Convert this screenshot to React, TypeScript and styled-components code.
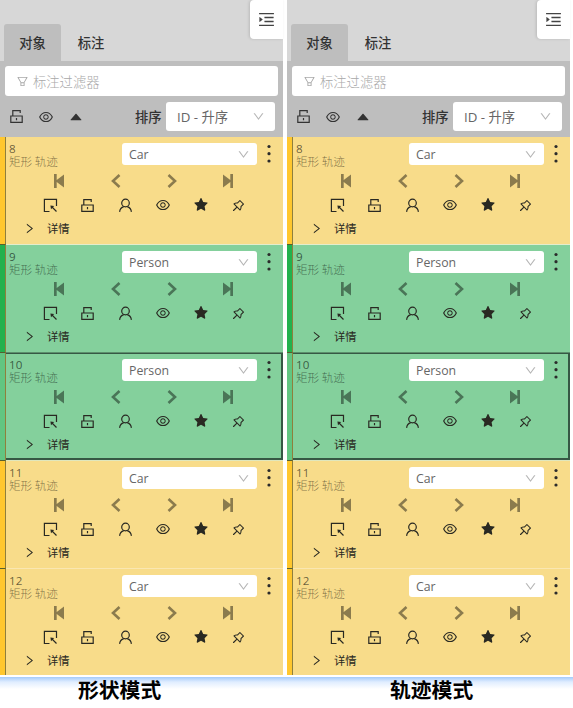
import React from "react";
import styled, { createGlobalStyle } from "styled-components";
import {
  AiFillCaretUp,
  AiFillStar,
  AiOutlineDown,
  AiOutlineEye,
  AiOutlineFilter,
  AiOutlineMenuUnfold,
  AiOutlinePushpin,
  AiOutlineRight,
} from "react-icons/ai";

const GlobalStyle = createGlobalStyle`
  * { box-sizing: border-box; }
  body {
    margin: 0;
    background: #fff;
    color: #333;
    font-family: "Noto Sans", "Noto Sans CJK SC", sans-serif;
  }
  svg { display: block; flex: none; }
`;

const Page = styled.main`
  width: 573px;
  height: 708px;
  overflow: hidden;
`;

const Panels = styled.div`
  display: flex;
  gap: 4px;
  height: 677px;
  padding-bottom: 3px;
`;

const Panel = styled.section`
  width: 283px;
  height: 674px;
  background: #bebebe;
`;

const TabBar = styled.header`
  display: flex;
  align-items: flex-end;
  height: 61px;
  padding-left: 4px;
  background: #d7d7d7;
`;

const Tab = styled.div<{ $active?: boolean }>`
  display: flex;
  align-items: center;
  justify-content: center;
  width: ${(p) => (p.$active ? 57 : 60)}px;
  height: 37px;
  border-radius: 3px 3px 0 0;
  background: ${(p) => (p.$active ? "#bebebe" : "transparent")};
  color: #333;
  font-size: 13.3px;
  font-weight: 500;
`;

const FoldButton = styled.div`
  display: flex;
  align-items: center;
  justify-content: center;
  align-self: flex-start;
  width: 33px;
  height: 39px;
  margin-left: auto;
  border-radius: 4px 0 0 4px;
  background: #fff;
  color: #444;
  box-shadow: -1px 0 3px #0002;
`;

const FilterBox = styled.div`
  display: flex;
  align-items: center;
  gap: 4px;
  width: 273px;
  height: 30px;
  margin: 5px 0 0 5px;
  padding-left: 11px;
  border-radius: 3px;
  background: #fff;
  color: #a8a8a8;
  font-size: 13.3px;
  font-weight: 300;
`;

const SortBar = styled.div`
  display: grid;
  grid-template-columns: 29px 30px 67px 31px 109px;
  align-items: center;
  height: 41px;
  padding-left: 9px;
  color: #333;
`;

const SortLabel = styled.span`
  font-size: 13.3px;
  font-weight: 500;
  line-height: 20px;
  white-space: nowrap;
`;

const Select = styled.div<{ $compact?: boolean }>`
  display: flex;
  align-items: center;
  justify-content: space-between;
  width: ${(p) => (p.$compact ? 135 : 109)}px;
  height: ${(p) => (p.$compact ? 22 : 29)}px;
  padding: ${(p) => (p.$compact ? "0 7px" : "0 10px 0 11px")};
  border-radius: 3px;
  background: #fff;
  color: #666;
  font-family: "Open Sans", "Noto Sans CJK SC", sans-serif;
  font-size: ${(p) => (p.$compact ? 12.3 : 13.3)}px;
  font-weight: 400;
  white-space: nowrap;

  svg { color: #b5b5b5; }
`;

const Item = styled.article<{ $bg: string; $last: boolean }>`
  display: grid;
  grid-template-columns: 6px 1fr;
  height: ${(p) => (p.$last ? 105 : 108)}px;
  background: ${(p) => p.$bg};
`;

const Strip = styled.div<{ $color: string; $last: boolean }>`
  border-right: 1px solid #8f7f3c;
  border-bottom: ${(p) => (p.$last ? "0" : "1px solid #56602f")};
  background: ${(p) => p.$color};
`;

const Body = styled.div<{ $active: boolean; $line: string }>`
  display: grid;
  grid-template-rows: 31px 24px 24px 1fr;
  padding: ${(p) => (p.$active ? "0" : "1px 1px 4px 0")};
  border: 0 solid #365844;
  border-width: ${(p) => (p.$active ? "1px 2px 2px 0" : "0")};
  box-shadow: ${(p) => (p.$active ? `0 1px ${p.$line}` : `inset 0 -1px ${p.$line}`)};
  margin-bottom: ${(p) => (p.$active ? "1px" : "0")};
`;

const Heading = styled.div`
  display: grid;
  grid-template-columns: 113px 135px 24px;
  padding: 5px 0 0 3px;
`;

const Identity = styled.div`
  display: grid;
  grid-template-rows: 12px 13px;
  white-space: nowrap;
`;

const ObjectNumber = styled.span`
  color: #00000098;
  font-family: "Open Sans", sans-serif;
  font-size: 11.6px;
  line-height: 11px;
`;

const Kind = styled.span`
  color: #00000085;
  font-family: "Noto Sans CJK SC", sans-serif;
  font-size: 11.6px;
  font-weight: 300;
  line-height: 12px;
`;

const NavRow = styled.div`
  display: grid;
  grid-template-columns: repeat(4, 56.4px);
  align-items: center;
  justify-items: center;
  padding-left: 25px;
  color: #00000070;
`;

const ActionRow = styled.div`
  display: grid;
  grid-template-columns: repeat(6, 37.6px);
  align-items: center;
  justify-items: center;
  padding-left: 25.6px;
  color: #292922;
`;

const Details = styled.div`
  display: flex;
  align-items: center;
  gap: 11px;
  height: 22px;
  padding-left: 17px;
  color: #292922;
  font-size: 11.3px;
`;

const Captions = styled.footer`
  display: grid;
  grid-template-columns: 312px 1fr;
  height: 31px;
  padding-left: 78px;
  background: linear-gradient(#a5cbfa, #e0edff 5px, #fff 12px);
  color: #000;
  font-size: 20.8px;
  font-weight: 700;
  line-height: 26px;
`;

const NavIcon = ({ shape }: { shape: "first" | "previous" | "next" | "last" }) => (
  <svg width="14" height="16" viewBox="0 0 14 16">
    {shape === "first" && <path d="M2 1h2.7v6L12 1.5v13L4.7 9v6H2z" fill="currentColor" />}
    {shape === "last" && <path d="M12 1H9.3v6L2 1.5v13L9.3 9v6H12z" fill="currentColor" />}
    {shape === "previous" && (
      <path d="M10.5 2 4 8l6.5 6" fill="none" stroke="currentColor" strokeWidth="2.6" />
    )}
    {shape === "next" && (
      <path d="M3.5 2 10 8l-6.5 6" fill="none" stroke="currentColor" strokeWidth="2.6" />
    )}
  </svg>
);

const LineIcon = styled.svg.attrs({ width: 15, height: 15, viewBox: "0 0 15 15" })`
  fill: none;
  stroke: currentColor;
  stroke-width: 1.2;
`;

const UnlockIcon = () => (
  <LineIcon>
    <path d="M1.8 7h11.4v6.4H1.8zM3.8 7V1.7h7.4v2.4M7.5 9v2.3" />
  </LineIcon>
);

const PersonIcon = () => (
  <LineIcon>
    <circle cx="7.5" cy="5" r="3.8" />
    <path d="M1.6 13.9c.3-3 1.8-4.6 4.2-5.3M13.4 13.9c-.3-3-1.8-4.6-4.2-5.3" />
  </LineIcon>
);

const CursorBoxIcon = () => (
  <LineIcon>
    <path d="M13.5 8V1.4H1.4v12.1H6.5M9 9l4.5 4.5" />
    <path d="M7.4 7.4l3.8.6-3.2 3.2z" fill="currentColor" stroke="none" />
  </LineIcon>
);

const MoreIcon = () => (
  <svg width="24" height="22" viewBox="0 0 24 22" fill="#2b2b2b">
    <circle cx="12" cy="3.5" r="1.6" />
    <circle cx="12" cy="10.7" r="1.6" />
    <circle cx="12" cy="18" r="1.6" />
  </svg>
);

const objects = [
  { id: 8, label: "Car", bg: "#f8dc8a", strip: "#ffc72e", line: "#e4edcc" },
  { id: 9, label: "Person", bg: "#84d09c", strip: "#23b14d", line: "#5c8f6c" },
  { id: 10, label: "Person", bg: "#84d09c", strip: "#62c581", line: "#e0e7bd", active: true },
  { id: 11, label: "Car", bg: "#f8dc8a", strip: "#ffc72e", line: "#fae7b1" },
  { id: 12, label: "Car", bg: "#f8dc8a", strip: "#ffc72e", line: "#f8dc8a" },
];

function ObjectItem({ item, last }: { item: (typeof objects)[number]; last: boolean }) {
  return (
    <Item $bg={item.bg} $last={last}>
      <Strip $color={item.strip} $last={last} />
      <Body $active={!!item.active} $line={item.line}>
        <Heading>
          <Identity>
            <ObjectNumber>{item.id}</ObjectNumber>
            <Kind>矩形 轨迹</Kind>
          </Identity>
          <Select $compact>
            {item.label}
            <AiOutlineDown size={13} />
          </Select>
          <MoreIcon />
        </Heading>
        <NavRow>
          <NavIcon shape="first" />
          <NavIcon shape="previous" />
          <NavIcon shape="next" />
          <NavIcon shape="last" />
        </NavRow>
        <ActionRow>
          <CursorBoxIcon />
          <UnlockIcon />
          <PersonIcon />
          <AiOutlineEye size={16} />
          <AiFillStar size={16} />
          <AiOutlinePushpin size={15} />
        </ActionRow>
        <Details>
          <AiOutlineRight size={13} />
          详情
        </Details>
      </Body>
    </Item>
  );
}

function Sidebar() {
  return (
    <Panel>
      <TabBar>
        <Tab $active>对象</Tab>
        <Tab>标注</Tab>
        <FoldButton>
          <AiOutlineMenuUnfold size={19} />
        </FoldButton>
      </TabBar>
      <FilterBox>
        <AiOutlineFilter size={13} />
        标注过滤器
      </FilterBox>
      <SortBar>
        <UnlockIcon />
        <AiOutlineEye size={16} />
        <AiFillCaretUp size={16} />
        <SortLabel>排序</SortLabel>
        <Select>
          ID - 升序
          <AiOutlineDown size={13} />
        </Select>
      </SortBar>
      {objects.map((item, index) => (
        <ObjectItem key={item.id} item={item} last={index === objects.length - 1} />
      ))}
    </Panel>
  );
}

export default function App() {
  return (
    <Page>
      <GlobalStyle />
      <Panels>
        <Sidebar />
        <Sidebar />
      </Panels>
      <Captions>
        <span>形状模式</span>
        <span>轨迹模式</span>
      </Captions>
    </Page>
  );
}
